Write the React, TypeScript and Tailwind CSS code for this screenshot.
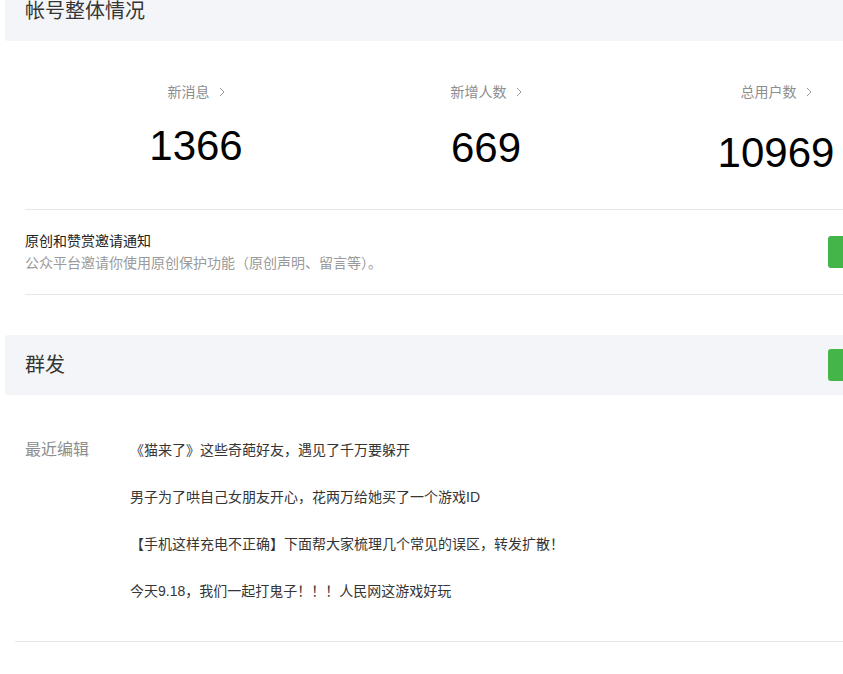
const stats = [
  { label: "新消息", value: "1366", offset: "mt-[23px]" },
  { label: "新增人数", value: "669", offset: "mt-[25px]" },
  { label: "总用户数", value: "10969", offset: "mt-[30px]" },
]

const recent = [
  "《猫来了》这些奇葩好友，遇见了千万要躲开",
  "男子为了哄自己女朋友开心，花两万给她买了一个游戏ID",
  "【手机这样充电不正确】下面帮大家梳理几个常见的误区，转发扩散！",
  "今天9.18，我们一起打鬼子！！！人民网这游戏好玩",
]

function Chevron() {
  return (
    <svg width="6" height="10" viewBox="0 0 6 10" className="ml-[9px]">
      <polyline points="1,1 5,5 1,9" fill="none" stroke="#9a9a9a" strokeWidth="1" />
    </svg>
  )
}

export default function App() {
  return (
    <div
      className="h-[674px] w-[843px] overflow-hidden bg-white text-[#353535]"
      style={{ fontFamily: '"Liberation Sans", "Noto Sans CJK SC", sans-serif' }}
    >
      <div className="ml-[5px] w-[900px]">
        <div className="-mt-[19px] flex h-[60px] items-center rounded-[3px] bg-[#f4f5f9] pl-[20px] text-[20px] leading-[24px] text-[#353535]">
          帐号整体情况
        </div>

        <div className="px-[20px]">
          <div className="flex h-[168px] pl-[26px] pt-[41px]">
            {stats.map((s) => (
              <div key={s.label} className="flex w-[290px] shrink-0 flex-col items-center">
                <div className="flex h-[20px] items-center text-[14px] leading-[20px] text-[#8d8d8d]">
                  {s.label}
                  <Chevron />
                </div>
                <div className={`${s.offset} text-[42px] leading-[42px] text-black`}>{s.value}</div>
              </div>
            ))}
          </div>

          <div className="flex h-[86px] items-center border-y border-[#e7e7eb]">
            <div className="flex-1 text-[14px] leading-[22px]">
              <div className="text-[#222]">原创和赞赏邀请通知</div>
              <div className="text-[#9a9a9a]">公众平台邀请你使用原创保护功能（原创声明、留言等）。</div>
            </div>
            <div className="h-[32px] w-[57px] rounded-[3px] bg-[#44b549]" />
          </div>
        </div>

        <div className="mt-[40px] flex h-[60px] items-center rounded-[3px] bg-[#f4f5f9] pl-[20px] pr-[20px] text-[20px] leading-[24px]">
          <span className="flex-1">群发</span>
          <div className="h-[32px] w-[57px] rounded-[3px] bg-[#44b549]" />
        </div>

        <div className="flex px-[20px] pb-[26px] pt-[32px]">
          <div className="flex h-[45px] w-[105px] items-center text-[16px] text-[#8d8d8d]">最近编辑</div>
          <div className="flex flex-col">
            {recent.map((t) => (
              <div key={t} className="flex h-[47px] items-center text-[14px] text-[#353535]">
                {t}
              </div>
            ))}
          </div>
        </div>
        <div className="ml-[10px] border-t border-[#e7e7eb]" />
      </div>
    </div>
  )
}
